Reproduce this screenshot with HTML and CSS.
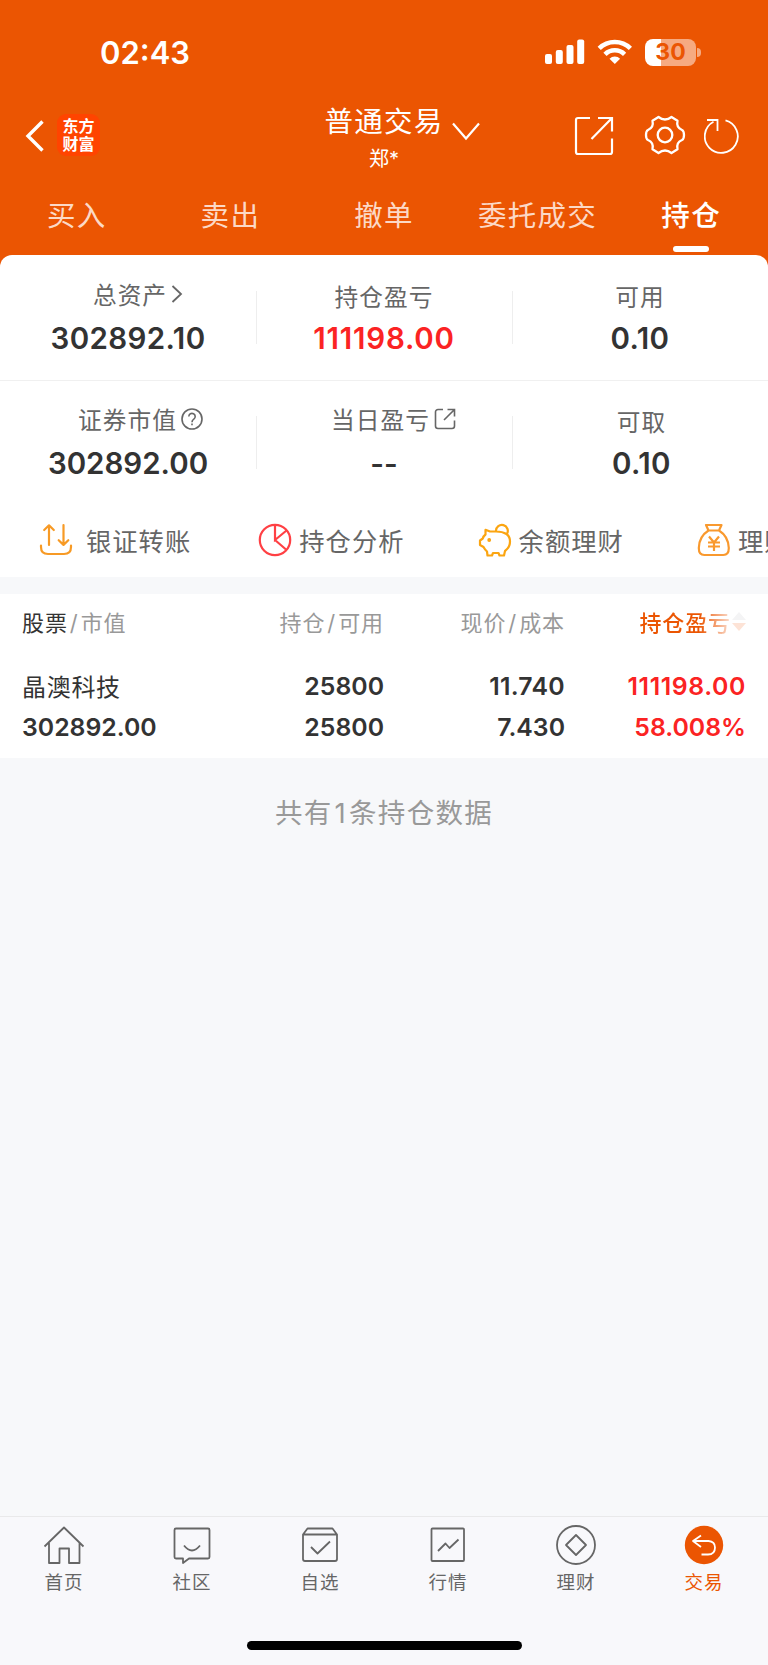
FILE: index.html
```html
<!DOCTYPE html>
<html lang="zh-CN">
<head>
    <meta charset="UTF-8">
    <meta name="viewport" content="width=device-width, initial-scale=1.0">
    <title>持仓</title>
    <link rel="stylesheet" href="styles.css">
</head>
<body>
    <header class="header">
        <div class="status">
            <span class="time">02:43</span>
            <svg class="signal" width="40" height="26" viewBox="0 0 40 26" fill="#fff">
                <rect x="0" y="15" width="7" height="10" rx="2"/>
                <rect x="10.8" y="11" width="7" height="14" rx="2"/>
                <rect x="21.5" y="6" width="7" height="19" rx="2"/>
                <rect x="32.2" y="0.5" width="7" height="24.5" rx="2"/>
            </svg>
            <svg class="wifi" width="36" height="26" viewBox="0 0 36 26" fill="none" stroke="#fff" stroke-width="4.6">
                <path d="M2.2 9.3a22.5 22.5 0 0 1 31.2 0"/>
                <path d="M8 15.3a14 14 0 0 1 19.6 0"/>
                <path d="M17.8 25l-5.3-5.3a7.6 7.6 0 0 1 10.6 0z" fill="#fff" stroke="none"/>
            </svg>
            <div class="battery"><span>30</span></div>
            <i class="battery-tip"></i>
        </div>
        <div class="nav">
            <svg class="back" width="20" height="34" viewBox="0 0 20 34" fill="none" stroke="#fff" stroke-width="3.4"><path d="M17.5 2.5L3 17l14.500 14.500"/></svg>
            <div class="logo">东方<br>财富</div>
            <div class="account">
                <div class="account-name">普通交易</div>
                <div class="account-user">郑*</div>
            </div>
            <svg class="down" width="30" height="20" viewBox="0 0 30 20" fill="none" stroke="#fff" stroke-width="2.2"><path d="M2 2.500L15 17.500 28 2.500"/></svg>
            <svg class="share" width="40" height="40" viewBox="0 0 40 40" fill="none" stroke="#fff" stroke-width="2.2"><path d="M16 2H4a2 2 0 0 0-2 2v32a2 2 0 0 0 2 2h32a2 2 0 0 0 2-2V22.500M24 2h14v13.500M37.500 2.500L17.500 23"/></svg>
            <svg class="gear" width="42" height="40" viewBox="0 0 42 40" fill="none" stroke="#fff" stroke-width="2.3" stroke-linejoin="round">
                <path d="M14.500 2Q21 7 27.500 2L33.500 5.800Q32 12.500 38 15Q40 16 40 20T38 25Q32 27.500 33.500 34.200L27.500 38Q21 33 14.500 38L8.500 34.200Q10 27.500 4 25Q2 24 2 20T4 15Q10 12.500 8.500 5.800Z"/>
                <circle cx="21" cy="20" r="7.300"/>
            </svg>
            <svg class="refresh" width="36" height="36" viewBox="0 0 36 36" fill="none" stroke="#fff" stroke-width="1.8"><path d="M21.500 2.400A16.500 16.500 0 1 1 9.500 3.800M3 2h10.500v11"/></svg>
        </div>
        <nav class="trade-tabs">
            <a>买入</a>
            <a>卖出</a>
            <a>撤单</a>
            <a>委托成交</a>
            <a class="active">持仓</a>
        </nav>
    </header>

    <main>
        <section class="summary">
            <div class="cell link">
                <div class="label">总资产<svg class="chev" width="12" height="20" viewBox="0 0 12 20" fill="none" stroke="#666" stroke-width="1.8"><path d="M1.500 2L10 10l-8.500 8"/></svg></div>
                <div class="value assets">302892.10</div>
            </div>
            <div class="cell">
                <div class="label">持仓盈亏</div>
                <div class="value red">111198.00</div>
            </div>
            <div class="cell">
                <div class="label">可用</div>
                <div class="value assets">0.10</div>
            </div>
        </section>
        <section class="summary second">
            <div class="cell link market">
                <div class="label">证券市值<svg width="22" height="22" viewBox="0 0 22 22" fill="none" stroke="#666" stroke-width="1.6"><circle cx="11" cy="11" r="10"/><path d="M7.800 8.500a3.200 3.200 0 1 1 5 2.700q-1.800 1.200-1.800 3M11 15.500v1.800"/></svg></div>
                <div class="value">302892.00</div>
            </div>
            <div class="cell link today">
                <div class="label">当日盈亏<svg width="22" height="22" viewBox="0 0 22 22" fill="none" stroke="#666" stroke-width="1.6"><path d="M9 1.500H4a2.500 2.500 0 0 0-2.500 2.500v14A2.500 2.500 0 0 0 4 20.500h14a2.500 2.500 0 0 0 2.500-2.500v-5.500M13.500 1.500h7v7M20.500 1.500L10 12"/></svg></div>
                <div class="value">--</div>
            </div>
            <div class="cell last">
                <div class="label">可取</div>
                <div class="value assets">0.10</div>
            </div>
        </section>

        <section class="actions">
            <div class="action transfer">
                <svg width="34" height="34" viewBox="0 0 34 34" fill="none" stroke="#f79a25" stroke-width="2.2" stroke-linecap="round" stroke-linejoin="round"><path d="M2 22.500v1.500q0 7 7 7h16q7 0 7-7v-1.500M10 22V2.500M5.200 7L10 2.300 14.800 7M24.500 2v19.500M19.700 17.200l4.800 4.700 4.800-4.700"/></svg>
                银证转账
            </div>
            <div class="action">
                <svg width="34" height="34" viewBox="0 0 34 34" fill="none" stroke="#ff4044" stroke-width="2.2"><circle cx="17" cy="17" r="15.200"/><path d="M17 2v15l11.500-9.500M17 17l11 9.500"/></svg>
                持仓分析
            </div>
            <div class="action">
                <svg width="34" height="34" viewBox="0 0 34 34" fill="none" stroke="#fba511" stroke-width="2.2" stroke-linejoin="round"><path d="M18 8.500H12L7.500 6.800V11.500Q5.500 13 4.800 15.500L2 17.500v4.500L5.500 24Q7 26.800 9 28.500L9.500 32.500h4.500l1-2.500h5.500l1 2.500h4.500l1-4.500Q32 24.500 32 18.500 32 13.500 28.500 11 24.500 8.500 18 8.500M18 8A5.900 5.900 0 1 1 28.900 11"/><circle cx="11.200" cy="17" r=".8" fill="#fba511"/></svg>
                余额理财
            </div>
            <div class="action">
                <svg width="34" height="34" viewBox="0 0 34 34" fill="none" stroke="#f9992e" stroke-width="2.2" stroke-linejoin="round"><path d="M9 2h15.500l-2.500 5.500H11.500zM11.500 7.500Q2 13.500 1.800 25q0 7 5.500 7h19q5.500 0 5.500-7Q31.500 13.500 22 7.500M12 13.500l5 6 5-6M11 19.500h12M11 23.500h12M17 19.500v8.500"/></svg>
                理财产品
            </div>
        </section>

        <section class="holdings">
            <div class="row head">
                <div><b>股票</b><em>/</em>市值</div>
                <div>持仓<em>/</em>可用</div>
                <div>现价<em>/</em>成本</div>
                <div class="sort">
                    <span>持仓盈亏</span>
                    <svg width="14" height="20" viewBox="0 0 14 20"><path d="M0 8L7 0l7 8z" fill="#f4f4f5"/><path d="M0 11h14l-7 8z" fill="#fde3d6"/></svg>
                </div>
            </div>
            <div class="row stock">
                <div class="name">晶澳科技</div>
                <div>25800</div>
                <div class="price">11.740</div>
                <div class="red profit">111198.00</div>
            </div>
            <div class="row stock">
                <div>302892.00</div>
                <div>25800</div>
                <div>7.430</div>
                <div class="red">58.008%</div>
            </div>
        </section>
        <p class="total">共有<span>1</span>条持仓数据</p>
    </main>

    <footer class="footer">
        <nav class="tabbar">
            <a>
                <svg width="42" height="42" viewBox="0 0 42 42"><path d="M1.500 22.500L21 3.500l19.500 19M6 19v20h10.500V24.500h9.500V39H36.500V19"/></svg>
                首页
            </a>
            <a>
                <svg width="42" height="42" viewBox="0 0 42 42"><path d="M5 4.500h32a1.500 1.500 0 0 1 1.500 1.500v27a1.500 1.500 0 0 1-1.500 1.500H18L12 39v-4.500H5A1.500 1.500 0 0 1 3.500 33V6A1.500 1.500 0 0 1 5 4.500zM13 21.500q8 10 16 0"/></svg>
                社区
            </a>
            <a>
                <svg width="42" height="42" viewBox="0 0 42 42"><path d="M4 10.500L8.500 4.500h25L38 10.500V35q0 2-2 2H6q-2 0-2-2zM4 10.500h34M12 23l6.500 6.500 12.500-12"/></svg>
                自选
            </a>
            <a>
                <svg width="42" height="42" viewBox="0 0 42 42"><rect x="4.500" y="4.500" width="32.500" height="32.500" rx="1"/><path d="M11 27l7.500-7.500 4 4.500 9-8.500"/></svg>
                行情
            </a>
            <a>
                <svg width="42" height="42" viewBox="0 0 42 42"><circle cx="21" cy="21" r="19"/><path d="M21 11l10 10-10 10-10-10z"/></svg>
                理财
            </a>
            <a class="active">
                <svg width="42" height="42" viewBox="0 0 42 42"><circle cx="21" cy="21" r="19.200" fill="#eb5502" stroke="none"/><path stroke="#fff" d="M18 11.500L10 17l8 6M10 17h15.500q6.500.5 6.500 6.500 0 7-7 7h-6.500"/></svg>
                交易
            </a>
        </nav>
        <div class="home-bar"></div>
    </footer>
</body>
</html>
```
FILE: styles.css
```css
*{
    box-sizing: border-box;
}
body{
    margin: 0;
    height: 1665px;
    display: flex;
    flex-direction: column;
    background-color: #f7f8fa;
    color: #333;
    font-family: Inter, "Noto Sans CJK SC", sans-serif;
    overflow: hidden;
}
svg{
    display: block;
    flex: none;
}
.header{
    height: 267px;
    margin-bottom: -12px;
    background-color: #eb5502;
    color: white;
}
.status{
    display: flex;
    align-items: center;
    height: 104px;
    padding-left: 100px;
}
.time{
    width: 445px;
    font-size: 31px;
    font-weight: 600;
}
.wifi{
    margin-left: 12px;
}
.battery{
    width: 51px;
    height: 27px;
    margin-left: 12px;
    border-radius: 8px;
    background: linear-gradient(90deg, #fff 31%, #f6aa81 31%);
    color: #eb5502;
    font-size: 23px;
    font-weight: 700;
    line-height: 27px;
    text-align: center;
}
.battery-tip{
    width: 4px;
    height: 9px;
    margin-left: 1px;
    border-radius: 0 4px 4px 0;
    background-color: #f6aa81;
}
.nav{
    display: flex;
    height: 64px;
    align-items: center;
    padding-left: 25px;
}
.back{
    margin-top: -1px;
}
.logo{
    width: 43px;
    height: 42px;
    margin: -2px 0 0 12px;
    padding-top: 3px;
    border-radius: 9px;
    background-color: #ff4400;
    font-family: "Noto Sans CJK SC", sans-serif;
    font-size: 16px;
    font-weight: 700;
    line-height: 17.500px;
    text-align: center;
}
.account{
    width: 120px;
    margin-left: 224px;
    padding-top: 5px;
    text-align: center;
    white-space: nowrap;
}
.account-name{
    font-size: 28.500px;
    letter-spacing: 1.200px;
    line-height: 38px;
}
.account-user{
    margin-top: 2px;
    font-size: 20px;
    line-height: 32px;
}
.down{
    margin: -10px 0 0 7px;
}
.share{
    margin: -1px 0 0 93px;
}
.gear{
    margin: -2px 0 0 30px;
}
.refresh{
    margin: -1px 0 0 18px;
}
.trade-tabs{
    display: flex;
    height: 87px;
    padding-top: 26px;
}
.trade-tabs a{
    display: flex;
    flex-direction: column;
    align-items: center;
    width: 153.600px;
    color: #fcd9c6;
    font-size: 28.500px;
    letter-spacing: 1.300px;
    line-height: 44px;
}
.trade-tabs a.active{
    color: white;
    font-weight: 500;
}
.trade-tabs a.active::after{
    content: "";
    width: 36px;
    height: 6px;
    margin-top: 8px;
    border-radius: 3px;
    background-color: white;
}
.summary{
    display: flex;
    height: 126px;
    padding-top: 23px;
    border-radius: 12px 12px 0 0;
    border-bottom: 1px solid #f0f0f0;
    background-color: white;
}
.second{
    height: 125px;
    padding-top: 22px;
    border-radius: 0;
    border-bottom: none;
}
.cell{
    width: 256px;
    text-align: center;
    background: linear-gradient(#eee, #eee) left 13px / 1px 53px no-repeat;
}
.cell:first-child{
    background: none;
}
.last{
    padding-left: 3px;
}
.label{
    display: flex;
    justify-content: center;
    align-items: center;
    height: 32px;
    padding-top: 4px;
    color: #666;
    font-size: 23.700px;
    letter-spacing: 1px;
}
.link .label{
    padding-top: 0;
    padding-left: 20px;
}
.market .label{
    padding-left: 25px;
}
.today .label{
    padding-left: 19px;
}
.label svg{
    margin-left: 4px;
}
.value{
    margin-top: 10px;
    font-size: 29.500px;
    font-weight: 600;
    line-height: 36px;
}
.assets{
    letter-spacing: .4px;
}
.red{
    color: #fb2323;
}
.value.red{
    letter-spacing: .8px;
}
.actions{
    display: flex;
    height: 71px;
    padding-left: 39px;
    background-color: white;
    overflow: hidden;
}
.action{
    display: flex;
    flex: none;
    align-items: center;
    gap: 7px;
    width: 219.300px;
    height: 68px;
    color: #666;
    font-size: 25.300px;
    letter-spacing: 1px;
    white-space: nowrap;
}
.transfer{
    gap: 13px;
}
.holdings{
    height: 164px;
    margin-top: 17px;
    padding: 7px 22px 0;
    background-color: white;
}
.row{
    display: grid;
    grid-template-columns: 179px 183px 181px 181px;
    height: 40.500px;
    align-items: center;
    text-align: right;
}
.row div:first-child{
    text-align: left;
}
.head{
    height: 40px;
    margin-bottom: 25px;
    color: #999;
    font-size: 22px;
    letter-spacing: .9px;
}
.head b{
    color: #333;
    font-weight: 400;
}
.head em{
    margin: 0 2px;
    font-style: normal;
}
.sort{
    display: flex;
    justify-content: flex-end;
    align-items: center;
    gap: 1px;
}
.sort span{
    background: linear-gradient(90deg, #eb5502 65%, #fbe0d2);
    background-clip: text;
    color: transparent;
    font-weight: 500;
}
.sort svg{
    margin-top: 2px;
}
.stock{
    font-size: 24.800px;
    font-weight: 600;
}
.price{
    letter-spacing: .3px;
}
.profit{
    letter-spacing: .6px;
}
.stock .name{
    padding-bottom: 2px;
    font-size: 24px;
    font-weight: 400;
    letter-spacing: .7px;
}
.total{
    margin: 35px 0 0;
    color: #999;
    font-size: 27.500px;
    letter-spacing: 1.300px;
    line-height: 40px;
    text-align: center;
}
.total span{
    margin: 0 2px;
}
.footer{
    height: 149px;
    margin-top: auto;
    border-top: 1px solid #e9e9ea;
    background-color: #f8f8fb;
}
.tabbar{
    display: flex;
    height: 124px;
    padding-top: 7px;
}
.tabbar a{
    display: flex;
    flex-direction: column;
    align-items: center;
    width: 128px;
    color: #666;
    font-size: 18.500px;
    letter-spacing: 1px;
    line-height: 32px;
}
.tabbar svg{
    fill: none;
    stroke: #666;
    stroke-width: 1.800px;
    stroke-linejoin: round;
}
.tabbar a.active{
    color: #eb5502;
}
.home-bar{
    width: 275px;
    height: 9px;
    margin: 0 auto;
    border-radius: 5px;
    background-color: black;
}
```
